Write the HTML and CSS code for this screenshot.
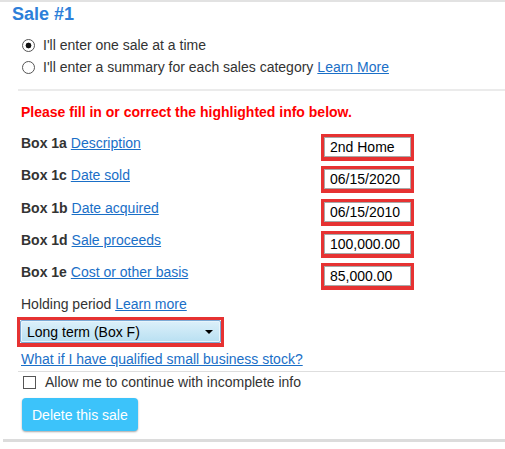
FILE: index.html
```html
<!DOCTYPE html>
<html lang="en">
<head>
    <meta charset="UTF-8">
    <meta name="viewport" content="width=device-width, initial-scale=1.0">
    <title>Sale #1</title>
    <link rel="stylesheet" href="styles.css">
</head>
<body>
    <div class="page">
        <h2 class="title">Sale #1</h2>

        <div class="choices">
            <label class="choice"><input type="radio" name="mode" checked> I'll enter one sale at a time</label>
            <label class="choice"><input type="radio" name="mode"> I'll enter a summary for each sales category <a href="#">Learn More</a></label>
        </div>

        <hr class="rule first">

        <p class="error">Please fill in or correct the highlighted info below.</p>

        <div class="rows">
            <div class="row">
                <span class="label"><b>Box 1a</b> <a href="#">Description</a></span>
                <span class="bad"><input type="text" value="2nd Home"></span>
            </div>
            <div class="row">
                <span class="label"><b>Box 1c</b> <a href="#">Date sold</a></span>
                <span class="bad"><input type="text" value="06/15/2020"></span>
            </div>
            <div class="row">
                <span class="label"><b>Box 1b</b> <a href="#">Date acquired</a></span>
                <span class="bad"><input type="text" value="06/15/2010"></span>
            </div>
            <div class="row">
                <span class="label"><b>Box 1d</b> <a href="#">Sale proceeds</a></span>
                <span class="bad"><input type="text" value="100,000.00"></span>
            </div>
            <div class="row">
                <span class="label"><b>Box 1e</b> <a href="#">Cost or other basis</a></span>
                <span class="bad"><input type="text" value="85,000.00"></span>
            </div>
        </div>

        <p class="holding">Holding period <a href="#">Learn more</a></p>

        <div class="bad select-wrap">
            <div class="select">
                <span>Long term (Box F)</span>
                <span class="arrow"></span>
            </div>
        </div>

        <p class="stock"><a href="#">What if I have qualified small business stock?</a></p>

        <hr class="rule second">

        <label class="allow"><input type="checkbox"> Allow me to continue with incomplete info</label>

        <button class="delete">Delete this sale</button>

        <div class="bottom"></div>
    </div>
</body>
</html>
```

FILE: styles.css
```css
body {
    margin: 0;
    font-family: 'Liberation Sans', Arial, sans-serif;
    font-size: 14px;
    color: #333;
    background: #fff;
}
a {
    color: #1a6fc7;
}
.page {
    border-top: 2px solid #e2e2e2;
}
.title {
    margin: 0;
    padding: 1px 0 0 12px;
    font-size: 18px;
    line-height: 22px;
    color: #2d7fd9;
}
.choices {
    margin-top: 9px;
    padding-left: 22px;
}
.choice {
    display: flex;
    align-items: center;
    gap: 8px;
    height: 22px;
    line-height: 22px;
}
.choice input {
    appearance: none;
    box-sizing: border-box;
    margin: 0;
    width: 13px;
    height: 13px;
    border: 1px solid #555;
    border-radius: 50%;
    background: #fff;
}
.choice input:checked {
    background: radial-gradient(circle, #111 0 2.6px, #fff 3.2px);
}
.choice a {
    margin-left: -4px;
}
.rule {
    border: none;
    margin: 0 0 0 18px;
}
.rule.first {
    margin-top: 11px;
    border-top: 2px solid #ebebeb;
}
.rule.second {
    margin-top: 3px;
    border-top: 1px solid #dedede;
}
.error {
    margin: 12px 0 0 21px;
    line-height: 18px;
    font-weight: bold;
    color: #f00;
}
.rows {
    margin-top: 13px;
    display: flex;
    flex-direction: column;
    gap: 5px;
}
.row {
    display: grid;
    grid-template-columns: 300px auto;
    align-items: start;
    padding-left: 21px;
    height: 27.3px;
}
.label {
    line-height: 18px;
}
.label b {
    color: #333;
}
.bad {
    display: inline-block;
    width: 93px;
    border: 3px solid #e63232;
    border-bottom-width: 4px;
    box-sizing: border-box;
}
.bad input {
    display: block;
    box-sizing: border-box;
    width: 100%;
    height: 20px;
    margin: 0;
    padding: 0 5px;
    border: 1px solid #a9a9a9;
    font-family: 'Liberation Sans', Arial, sans-serif;
    font-size: 14px;
    color: #000;
}
.holding {
    margin: 5px 0 0 21px;
    line-height: 18px;
}
.select-wrap {
    display: block;
    width: 207px;
    margin: 4px 0 0 17px;
}
.select {
    display: flex;
    align-items: center;
    justify-content: space-between;
    height: 21px;
    padding: 0 7px 0 6px;
    border: 1px solid #7ca9d4;
    border-radius: 2px;
    background: linear-gradient(#dcf0fa, #b9e0f2);
    color: #000;
    box-shadow: inset 0 0 0 1px #e8f5fc;
}
.arrow {
    width: 0;
    height: 0;
    border-left: 4px solid transparent;
    border-right: 4px solid transparent;
    border-top: 4px solid #000;
}
.stock {
    margin: 3px 0 0 21px;
    line-height: 18px;
}
.allow {
    display: flex;
    align-items: center;
    gap: 9px;
    margin: 1px 0 0 23px;
    height: 18px;
}
.allow input {
    appearance: none;
    box-sizing: border-box;
    margin: 0;
    width: 13px;
    height: 13px;
    border: 1px solid #555;
    background: #fff;
}
.delete {
    display: block;
    margin: 7px 0 0 22px;
    height: 33px;
    padding: 0 10px;
    border: none;
    border-radius: 4px;
    background: #3cc3fa;
    color: #fff;
    font-family: 'Liberation Sans', Arial, sans-serif;
    font-size: 14px;
    box-shadow: 0 1px 2px rgba(0, 0, 0, 0.35);
}
.bottom {
    margin: 8px 0 0 3px;
    border-top: 3px solid #dcdcdc;
}
```
